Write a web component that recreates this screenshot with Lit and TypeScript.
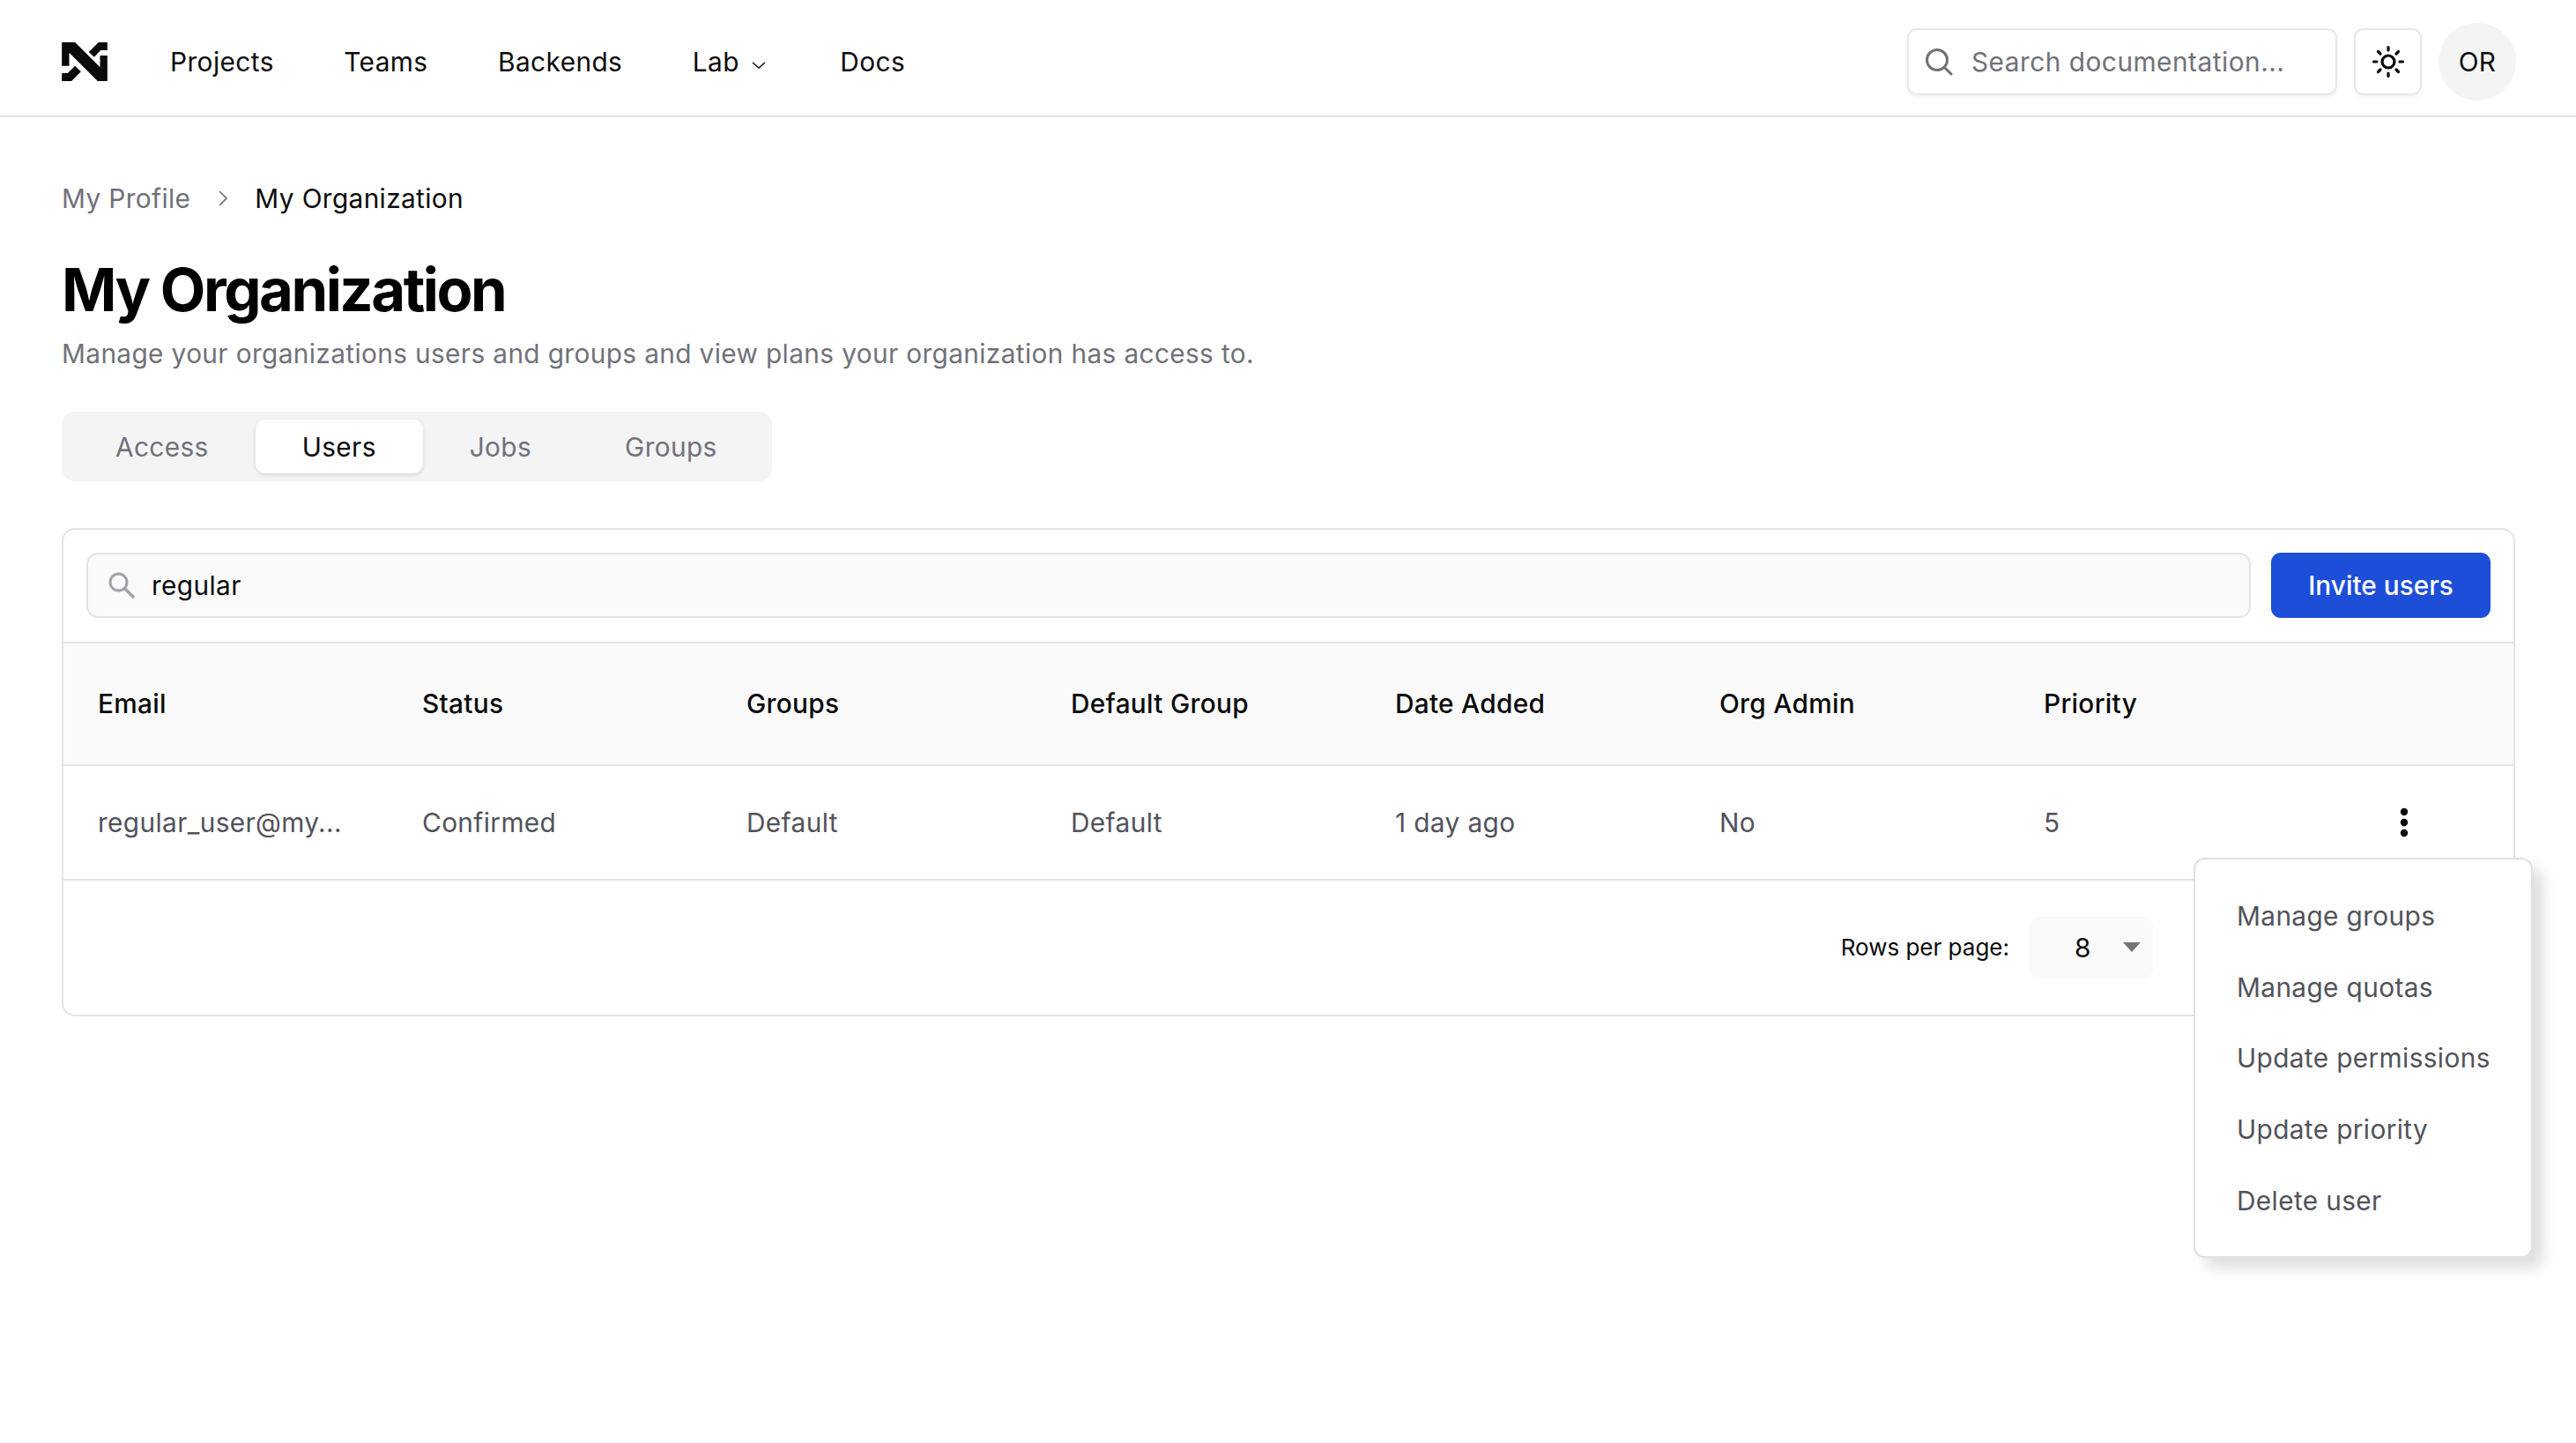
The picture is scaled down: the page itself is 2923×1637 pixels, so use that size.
import { LitElement, html, css } from "lit";
import { customElement } from "lit/decorators.js";

const COLS = ["Email", "Status", "Groups", "Default Group", "Date Added", "Org Admin", "Priority"];
const CELLS = ["regular_user@my...", "Confirmed", "Default", "Default", "1 day ago", "No", "5"];
const MENU = ["Manage groups", "Manage quotas", "Update permissions", "Update priority", "Delete user"];
const NAV = ["Projects", "Teams", "Backends"];

@customElement("app-root")
export class AppRoot extends LitElement {
  static styles = css`
    :host {
      display: block;
      position: relative;
      min-height: 1637px;
      background: #fff;
      color: #0a0a0a;
      font-family: Inter, "Liberation Sans", sans-serif;
      font-size: 29.8px;
      line-height: 44px;
      letter-spacing: 0.37px;
    }
    * { box-sizing: border-box; }
    svg { display: block; flex: none; }

    .nav {
      display: flex;
      align-items: center;
      padding: 26px 68px 17px 70px;
      border-bottom: 2px solid #e5e5e5;
    }
    .logo { width: 52px; height: 44px; margin-right: 71px; }
    .links { display: flex; align-items: center; gap: 79.5px; letter-spacing: 0.42px; }
    .lab { display: flex; align-items: center; gap: 14px; margin-right: 5px; }
    .lab svg { margin-top: 8px; }
    .right { margin-left: auto; display: flex; align-items: center; }
    .search {
      width: 488px;
      height: 76px;
      display: flex;
      align-items: center;
      padding-left: 18px;
      gap: 21px;
      border: 2px solid #e8e8e8;
      border-radius: 11px;
      color: #71717a;
      letter-spacing: 0.5px;
      box-shadow: 0 2px 4px rgba(0, 0, 0, 0.05);
      margin-right: 19px;
    }
    .theme {
      width: 77px;
      height: 76px;
      display: flex;
      align-items: center;
      justify-content: center;
      border: 2px solid #e8e8e8;
      border-radius: 11px;
      box-shadow: 0 2px 4px rgba(0, 0, 0, 0.05);
      margin-right: 19px;
    }
    .avatar {
      width: 88px;
      height: 88px;
      border-radius: 50%;
      background: #f4f4f5;
      display: flex;
      align-items: center;
      justify-content: center;
    }

    .main { padding: 70px 69px 0 70px; }
    .crumbs { display: flex; align-items: center; }
    .crumbs .muted { color: #71717a; }
    .crumbs svg { margin: 0 31px 0 32px; }
    h1 {
      margin: 44px 0 12px;
      font-size: 67px;
      line-height: 76px;
      font-weight: 700;
      letter-spacing: -0.037em;
      color: #000;
    }
    .sub { color: #71717a; }
    .tabs {
      margin-top: 44px;
      display: inline-flex;
      align-items: center;
      height: 79px;
      padding: 0 9px 0 8px;
      border-radius: 15px;
      background: #f4f4f5;
      color: #71717a;
    }
    .tab { height: 61px; padding: 0 53px; display: flex; align-items: center; border-radius: 11px; }
    .tab.on {
      background: #fff;
      color: #0a0a0a;
      box-shadow: 0 2px 5px rgba(0, 0, 0, 0.12);
    }

    .card {
      margin-top: 53px;
      border: 2px solid #e4e4e7;
      border-radius: 15px;
      overflow: hidden;
    }
    .toolbar {
      display: flex;
      gap: 23px;
      padding: 26px 26px 27px;
      border-bottom: 2px solid #e4e4e7;
    }
    .filter {
      flex: 1;
      height: 74px;
      display: flex;
      align-items: center;
      gap: 18px;
      padding-left: 23px;
      background: #fafafa;
      border: 2px solid #e4e4e7;
      border-radius: 13px;
    }
    .invite {
      width: 249px;
      height: 74px;
      display: flex;
      align-items: center;
      justify-content: center;
      background: #1d4ed8;
      color: #fff;
      font-weight: 500;
      letter-spacing: 0;
      border-radius: 11px;
    }
    .row {
      display: grid;
      grid-template-columns: repeat(7, 368px) 1fr;
      align-items: center;
      padding-left: 39px;
      border-bottom: 2px solid #e4e4e7;
    }
    .row.head { height: 139px; background: #fafafa; font-weight: 500; letter-spacing: 0.28px; padding-bottom: 1px; }
    .row.body { height: 130px; color: #52525b; padding-bottom: 1px; }
    .kebab { display: flex; margin-left: 36px; }
    .foot {
      height: 152px;
      display: flex;
      align-items: center;
      justify-content: flex-end;
      padding: 0 409px 1px 0;
      gap: 23px;
    }
    .rpp { font-size: 26px; font-weight: 400; letter-spacing: 0; }
    .select {
      width: 140px;
      height: 70px;
      display: flex;
      align-items: center;
      background: #fafafa;
      border-radius: 11px;
      padding-left: 51px;
      gap: 36px;
    }

    .menu {
      position: absolute;
      top: 973px;
      right: 49px;
      width: 385px;
      height: 454px;
      padding: 24px 0 0 47px;
      background: #fff;
      border: 2px solid #e0e0e2;
      border-radius: 13px;
      box-shadow: 12px 12px 16px rgba(0, 0, 0, 0.13);
      color: #52525b;
    }
    .menu div { height: 80.6px; display: flex; align-items: center; }
  `;

  render() {
    return html`
      <div class="nav">
        <svg class="logo" viewBox="60 55 155 132" fill="#0a0a0a">
          <path d="M60 55H105L190 140V100H215V187H182L85 90V135H60Z" />
          <path d="M185 55H215V82H192L170 105L152 88Z" />
          <path d="M60 187H93L125 155L105 135L80 160H60Z" />
        </svg>
        <div class="links">
          ${NAV.map((n) => html`<span>${n}</span>`)}
          <span class="lab">
            Lab
            <svg width="16" height="8" viewBox="0 0 16 8" fill="none" stroke="#0a0a0a" stroke-width="1.5">
              <path d="M1 1L8 7L15 1" />
            </svg>
          </span>
          <span>Docs</span>
        </div>
        <div class="right">
          <div class="search">
            <svg width="32" height="32" viewBox="0 0 32 32" fill="none" stroke="#71717a" stroke-width="3" stroke-linecap="round">
              <circle cx="14" cy="14" r="11.5" />
              <path d="M23 23L30 30" />
            </svg>
            <span>Search documentation...</span>
          </div>
          <div class="theme">
            <svg width="38" height="38" viewBox="0 0 38 38" fill="none" stroke="#0a0a0a" stroke-width="3.2" stroke-linecap="round">
              <circle cx="19" cy="19" r="7" />
              <path d="M19 2.5V6M19 32V35.5M2.5 19H6M32 19H35.5M7.5 7.5L10 10M28 28L30.5 30.5M7.5 30.5L10 28M28 10L30.5 7.5" />
            </svg>
          </div>
          <div class="avatar">OR</div>
        </div>
      </div>

      <div class="main">
        <div class="crumbs">
          <span class="muted">My Profile</span>
          <svg width="10" height="20" viewBox="0 0 10 20" fill="none" stroke="#71717a" stroke-width="1.6">
            <path d="M1 2L9 10L1 18" />
          </svg>
          <span>My Organization</span>
        </div>
        <h1>My Organization</h1>
        <div class="sub">Manage your organizations users and groups and view plans your organization has access to.</div>
        <div class="tabs">
          <span class="tab">Access</span>
          <span class="tab on">Users</span>
          <span class="tab">Jobs</span>
          <span class="tab">Groups</span>
        </div>

        <div class="card">
          <div class="toolbar">
            <div class="filter">
              <svg width="31" height="30" viewBox="0 0 31 30" fill="none" stroke="#a1a1aa" stroke-width="3">
                <circle cx="11.5" cy="11.5" r="9.5" />
                <path d="M18 18L29 29" stroke-width="3.6" />
              </svg>
              <span>regular</span>
            </div>
            <div class="invite">Invite users</div>
          </div>
          <div class="row head">
            ${COLS.map((c) => html`<span>${c}</span>`)}
          </div>
          <div class="row body">
            ${CELLS.map((c) => html`<span>${c}</span>`)}
            <span class="kebab">
              <svg width="10" height="34" viewBox="0 0 10 34" fill="#0a0a0a">
                <circle cx="5" cy="5" r="4.2" />
                <circle cx="5" cy="17" r="4.2" />
                <circle cx="5" cy="29" r="4.2" />
              </svg>
            </span>
          </div>
          <div class="foot">
            <span class="rpp">Rows per page:</span>
            <div class="select">
              <span>8</span>
              <svg width="20" height="11" viewBox="0 0 20 11" fill="#757575"><path d="M0 0H20L10 11Z" /></svg>
            </div>
          </div>
        </div>
      </div>

      <div class="menu">
        ${MENU.map((m) => html`<div>${m}</div>`)}
      </div>
    `;
  }
}
